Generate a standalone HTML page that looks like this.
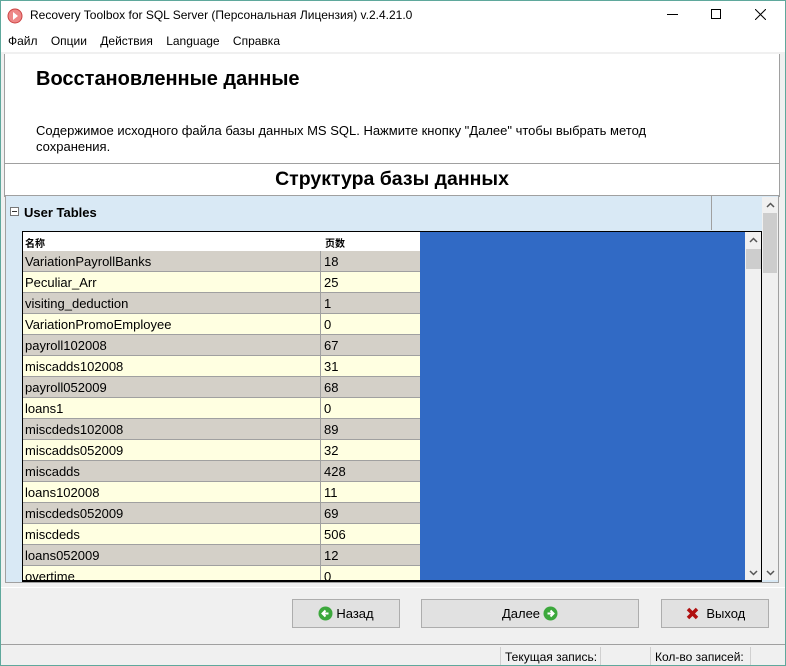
<!DOCTYPE html>
<html><head><meta charset="utf-8"><style>
*{margin:0;padding:0;box-sizing:border-box}
body{width:786px;height:666px;position:relative;overflow:hidden;background:#f0f0f0;font-family:"Liberation Sans","Noto Sans CJK SC",sans-serif;font-size:12px;color:#000}
.a{position:absolute}
.row{position:absolute;left:0;width:397px;height:21px;border-bottom:1px solid #a0a0a0}
.row span{position:absolute;top:3px;font-size:13px}
.row .n{left:2px}.row .v{left:301px}
.row i{position:absolute;left:297px;top:0;width:1px;height:21px;background:#a0a0a0}
.btn{position:absolute;top:599px;height:29px;border:1px solid #adadad;background:#e1e1e1;font-size:13px;display:flex;align-items:center;justify-content:center;gap:3px}
</style></head><body>
<div class="a" style="left:0;top:0;width:786px;height:666px;border:1px solid #5fa89c;pointer-events:none;z-index:9"></div>
<div class="a" style="left:1px;top:1px;width:784px;height:30px;background:#fff"></div>
<svg class="a" style="left:7px;top:8px" width="16" height="16"><circle cx="8" cy="8" r="7" fill="#e88" stroke="#c44"/><path d="M6 4l5 4-5 4z" fill="#fff"/></svg>
<div class="a" style="left:30px;top:8px;font-size:12px">Recovery Toolbox for SQL Server (Персональная Лицензия) v.2.4.21.0</div>
<div class="a" style="left:667px;top:14px;width:11px;height:1px;background:#000"></div>
<div class="a" style="left:711px;top:9px;width:10px;height:10px;border:1px solid #000"></div>
<svg class="a" style="left:755px;top:9px" width="11" height="11"><path d="M0 0L11 11M11 0L0 11" stroke="#000" stroke-width="1"/></svg>
<div class="a" style="left:1px;top:31px;width:784px;height:21px;background:#fff"></div>
<div class="a" style="left:8px;top:34px;font-size:12px">Файл&nbsp;&nbsp;&nbsp; Опции&nbsp;&nbsp;&nbsp; Действия&nbsp;&nbsp;&nbsp; Language&nbsp;&nbsp;&nbsp; Справка</div>
<div class="a" style="left:4px;top:54px;width:776px;height:143px;background:#fff;border-left:1px solid #a0a0a0;border-right:1px solid #a0a0a0"></div>
<div class="a" style="left:36px;top:68px;font-size:20px;font-weight:bold">Восстановленные данные</div>
<div class="a" style="left:36px;top:123px;font-size:13px;line-height:16px">Содержимое исходного файла базы данных MS SQL. Нажмите кнопку "Далее" чтобы выбрать метод<br>сохранения.</div>
<div class="a" style="left:5px;top:163px;width:774px;height:1px;background:#a0a0a0"></div>
<div class="a" style="left:5px;top:168px;width:774px;text-align:center;font-size:19.5px;font-weight:bold">Структура базы данных</div>
<div class="a" style="left:5px;top:195px;width:774px;height:388px;border:1px solid #a0a0a0;background:#d9e9f5"></div>
<div class="a" style="left:711px;top:196px;width:1px;height:34px;background:#a0a0a0"></div>
<div class="a" style="left:10px;top:207px;width:9px;height:9px;border:1px solid #777;background:#fff"></div>
<div class="a" style="left:12px;top:211px;width:5px;height:1px;background:#333"></div>
<div class="a" style="left:24px;top:205px;font-size:13px;font-weight:bold">User Tables</div>
<div class="a" style="left:762px;top:197px;width:16px;height:383px;background:#f0f0f0"></div>
<div class="a" style="left:763px;top:213px;width:14px;height:60px;background:#cdcdcd"></div>
<svg class="a" style="left:766px;top:202px" width="9" height="6"><path d="M1 5L4.5 1.5 8 5" stroke="#555" stroke-width="1.5" fill="none"/></svg>
<svg class="a" style="left:766px;top:570px" width="9" height="6"><path d="M1 1L4.5 4.5 8 1" stroke="#555" stroke-width="1.5" fill="none"/></svg>
<div class="a" style="left:22px;top:231px;width:740px;height:351px;border:1px solid #000;border-bottom:2px solid #000;overflow:hidden;background:#316ac5">
 <div class="a" style="left:0;top:0;width:397px;height:19px;background:#fff;font-size:10px;font-weight:bold"><span class="a" style="left:2px;top:3px">名称</span><span class="a" style="left:302px;top:3px">页数</span></div>
 <div class="a" style="left:722px;top:0;width:17px;height:350px;background:#f0f0f0"></div>
 <div class="a" style="left:723px;top:17px;width:15px;height:20px;background:#cdcdcd"></div>
 <svg class="a" style="left:726px;top:5px" width="9" height="6"><path d="M1 5L4.5 1.5 8 5" stroke="#555" stroke-width="1.5" fill="none"/></svg>
 <svg class="a" style="left:726px;top:338px" width="9" height="6"><path d="M1 1L4.5 4.5 8 1" stroke="#555" stroke-width="1.5" fill="none"/></svg>
 <div class="row" style="top:19px;background:#d4d0c8"><span class="n">VariationPayrollBanks</span><i></i><span class="v">18</span></div>
 <div class="row" style="top:40px;background:#ffffe1"><span class="n">Peculiar_Arr</span><i></i><span class="v">25</span></div>
 <div class="row" style="top:61px;background:#d4d0c8"><span class="n">visiting_deduction</span><i></i><span class="v">1</span></div>
 <div class="row" style="top:82px;background:#ffffe1"><span class="n">VariationPromoEmployee</span><i></i><span class="v">0</span></div>
 <div class="row" style="top:103px;background:#d4d0c8"><span class="n">payroll102008</span><i></i><span class="v">67</span></div>
 <div class="row" style="top:124px;background:#ffffe1"><span class="n">miscadds102008</span><i></i><span class="v">31</span></div>
 <div class="row" style="top:145px;background:#d4d0c8"><span class="n">payroll052009</span><i></i><span class="v">68</span></div>
 <div class="row" style="top:166px;background:#ffffe1"><span class="n">loans1</span><i></i><span class="v">0</span></div>
 <div class="row" style="top:187px;background:#d4d0c8"><span class="n">miscdeds102008</span><i></i><span class="v">89</span></div>
 <div class="row" style="top:208px;background:#ffffe1"><span class="n">miscadds052009</span><i></i><span class="v">32</span></div>
 <div class="row" style="top:229px;background:#d4d0c8"><span class="n">miscadds</span><i></i><span class="v">428</span></div>
 <div class="row" style="top:250px;background:#ffffe1"><span class="n">loans102008</span><i></i><span class="v">11</span></div>
 <div class="row" style="top:271px;background:#d4d0c8"><span class="n">miscdeds052009</span><i></i><span class="v">69</span></div>
 <div class="row" style="top:292px;background:#ffffe1"><span class="n">miscdeds</span><i></i><span class="v">506</span></div>
 <div class="row" style="top:313px;background:#d4d0c8"><span class="n">loans052009</span><i></i><span class="v">12</span></div>
 <div class="row" style="top:334px;background:#ffffe1"><span class="n">overtime</span><i></i><span class="v">0</span></div>
</div>
<div class="a" style="left:1px;top:587px;width:784px;height:1px;background:#fff"></div>
<div class="btn" style="left:292px;width:108px"><svg width="15" height="15"><circle cx="7.5" cy="7.5" r="7" fill="#3ca83c"/><path d="M10.5 7.5H5M7.5 4.5l-3 3 3 3" stroke="#fff" stroke-width="2" fill="none"/></svg>Назад</div>
<div class="btn" style="left:421px;width:218px">Далее <svg width="15" height="15"><circle cx="7.5" cy="7.5" r="7" fill="#3ca83c"/><path d="M4.5 7.5H10M7.5 4.5l3 3-3 3" stroke="#fff" stroke-width="2" fill="none"/></svg></div>
<div class="btn" style="left:661px;width:108px"><svg width="15" height="15"><path d="M3 3l9 9M12 3l-9 9" stroke="#b01010" stroke-width="3.5"/></svg>&nbsp;Выход</div>
<div class="a" style="left:1px;top:644px;width:784px;height:1px;background:#a0a0a0"></div>
<div class="a" style="left:500px;top:647px;width:1px;height:18px;background:#d0d0d0"></div>
<div class="a" style="left:600px;top:647px;width:1px;height:18px;background:#d0d0d0"></div>
<div class="a" style="left:650px;top:647px;width:1px;height:18px;background:#d0d0d0"></div>
<div class="a" style="left:750px;top:647px;width:1px;height:18px;background:#d0d0d0"></div>
<div class="a" style="left:505px;top:650px">Текущая запись:</div>
<div class="a" style="left:655px;top:650px">Кол-во записей:</div>
</body></html>
